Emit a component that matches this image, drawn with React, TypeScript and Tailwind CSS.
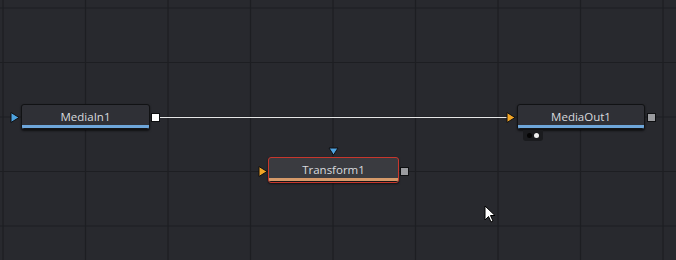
import React from 'react';

const GRID_X = [3, 85.5, 168, 250.5, 333, 415.5, 498, 580.5, 663];
const GRID_Y = [8, 62.5, 117, 171.5, 226];

interface NodeProps {
  label: string;
  left: number;
  top: number;
  width: number;
  selected?: boolean;
  bar: string;
}

const Node = ({ label, left, top, width, selected, bar }: NodeProps) => (
  <div
    className={
      'absolute h-[26px] rounded-[3px] border flex flex-col overflow-hidden shadow-[0_1px_2px_rgba(0,0,0,0.6)] ' +
      (selected ? 'border-[#c8372d] bg-[#3a3b40]' : 'border-[#111214] bg-[#2f3036]')
    }
    style={{ left, top, width }}
  >
    <div className="flex-1 flex items-center justify-center text-[11.5px] text-[#d8dade] leading-none pt-[3px]">
      {label}
    </div>
    <div className={'h-[4px] border-b border-[#141517] ' + bar} />
  </div>
);

export default function App() {
  return (
    <div className="relative w-[676px] h-[260px] overflow-hidden bg-[#28292e] font-['Open_Sans',sans-serif]">
      <svg className="absolute inset-0" width="676" height="260">
        {GRID_X.map((x) => (
          <line key={'x' + x} x1={x} x2={x} y1={0} y2={260} stroke="#1d1e22" strokeWidth="1.2" />
        ))}
        {GRID_Y.map((y) => (
          <line key={'y' + y} y1={y} y2={y} x1={0} x2={676} stroke="#1d1e22" strokeWidth="1.2" />
        ))}
        {/* connection */}
        <line x1={159} y1={117.5} x2={508} y2={117.5} stroke="#e6e6e6" strokeWidth="1" />
        {/* MediaIn1 input */}
        <polygon points="11,112.5 19,117.5 11,122.5" fill="#4ea3e0" stroke="#0e0f11" strokeWidth="1" />
        {/* MediaIn1 output */}
        <rect x={151.5} y={113.5} width={8} height={8} fill="#ffffff" stroke="#0e0f11" />
        {/* MediaOut1 input */}
        <polygon points="507,112.5 515,117.5 507,122.5" fill="#f2a526" stroke="#0e0f11" strokeWidth="1" />
        {/* MediaOut1 output */}
        <rect x={647.5} y={113.5} width={8} height={8} fill="#9a9b9f" stroke="#0e0f11" />
        {/* Transform1 inputs */}
        <polygon points="329,148 338,148 333.5,155" fill="#4ea3e0" stroke="#0e0f11" strokeWidth="1" />
        <polygon points="259,166.5 267,171.5 259,176.5" fill="#f2a526" stroke="#0e0f11" strokeWidth="1" />
        <rect x={400.5} y={167.5} width={8} height={8} fill="#9a9b9f" stroke="#0e0f11" />
      </svg>

      <Node label="MediaIn1" left={21} top={104} width={129} bar="bg-[#6ea6da]" />
      <Node label="MediaOut1" left={517} top={104} width={128} bar="bg-[#6ea6da]" />
      <Node label="Transform1" left={268} top={157} width={131} selected bar="bg-[#d59a6a]" />

      {/* view indicator tab under MediaOut1 */}
      <div className="absolute left-[523px] top-[130px] w-[20px] h-[11px] bg-[#1a1b1e] rounded-b-[3px] flex items-center justify-center gap-[2px]">
        <span className="w-[5px] h-[5px] rounded-full bg-[#050505]" />
        <span className="w-[5px] h-[5px] rounded-full bg-[#f0f0f0]" />
      </div>

      {/* cursor */}
      <svg className="absolute left-[484px] top-[205px]" width="14" height="20" viewBox="0 0 14 20">
        <path d="M1 1 L1 15 L4.5 11.5 L7 17 L9 16 L6.5 10.5 L11 10.5 Z" fill="#ffffff" stroke="#000000" strokeWidth="1" strokeLinejoin="miter" />
      </svg>
    </div>
  );
}
